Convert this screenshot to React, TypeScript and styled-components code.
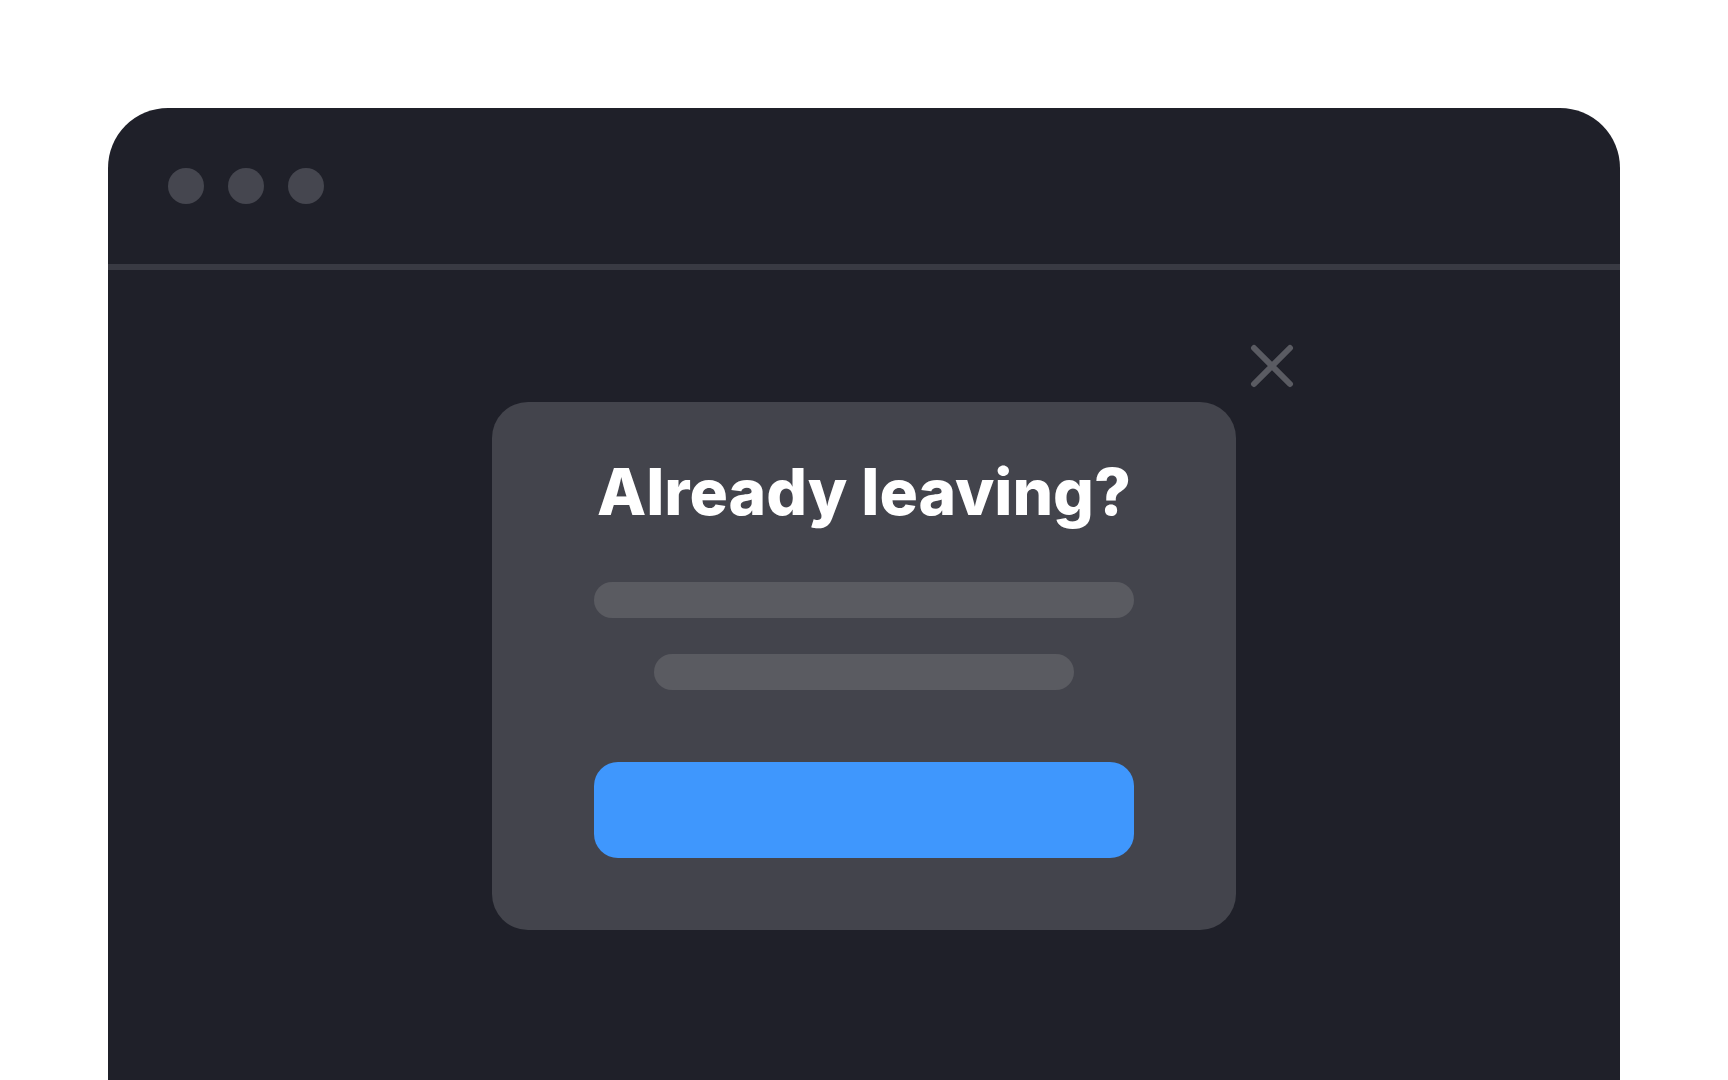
import styled, { createGlobalStyle } from 'styled-components'

const GlobalStyle = createGlobalStyle`
  html, body {
    margin: 0;
    padding: 0;
    background: #ffffff;
    overflow: hidden;
  }
  body {
    font-family: Inter, "Noto Sans", sans-serif;
  }
`

const Page = styled.div`
  padding: 108px 108px 0;
  height: 100vh;
  box-sizing: border-box;
`

const Window = styled.div`
  background: #1f2029;
  border-radius: 60px 60px 0 0;
  height: 100%;
  display: flex;
  flex-direction: column;
`

const TitleBar = styled.div`
  height: 96px;
  padding: 60px 0 0 60px;
  display: flex;
  gap: 24px;
  border-bottom: 6px solid #393a43;
`

const Dot = styled.span`
  width: 36px;
  height: 36px;
  border-radius: 50%;
  background: #45464f;
`

const Content = styled.div`
  flex: 1;
  display: flex;
  justify-content: center;
  align-items: flex-start;
  padding-top: 132px;
`

const Modal = styled.div`
  position: relative;
  width: 744px;
  box-sizing: border-box;
  padding: 58px 102px 72px;
  background: #43444c;
  border-radius: 36px;
  display: flex;
  flex-direction: column;
  align-items: center;
`

const CloseButton = styled.button`
  position: absolute;
  top: -60px;
  right: -60px;
  width: 48px;
  height: 48px;
  padding: 0;
  border: 0;
  background: none;
  cursor: pointer;
  display: flex;
`

const Title = styled.h1`
  margin: 0;
  font-size: 64px;
  line-height: 64px;
  font-weight: 800;
  color: #ffffff;
  white-space: nowrap;
`

const TextLine = styled.div<{ $width: number }>`
  width: ${(p) => p.$width}px;
  height: 36px;
  border-radius: 18px;
  background: #5a5b61;
`

const Lines = styled.div`
  display: flex;
  flex-direction: column;
  align-items: center;
  gap: 36px;
  margin-top: 58px;
`

const Action = styled.div`
  width: 540px;
  height: 96px;
  margin-top: 72px;
  border-radius: 24px;
  background: #3f97fd;
`

const CloseIcon = () => (
  <svg width="48" height="48" viewBox="0 0 48 48" fill="none">
    <path
      d="M6 6 L42 42 M42 6 L6 42"
      stroke="#5a5b62"
      strokeWidth="6"
      strokeLinecap="round"
    />
  </svg>
)

const App = () => (
  <>
    <GlobalStyle />
    <Page>
      <Window>
        <TitleBar>
          <Dot />
          <Dot />
          <Dot />
        </TitleBar>
        <Content>
          <Modal>
            <CloseButton aria-label="Close">
              <CloseIcon />
            </CloseButton>
            <Title>Already leaving?</Title>
            <Lines>
              <TextLine $width={540} />
              <TextLine $width={420} />
            </Lines>
            <Action />
          </Modal>
        </Content>
      </Window>
    </Page>
  </>
)

export default App
